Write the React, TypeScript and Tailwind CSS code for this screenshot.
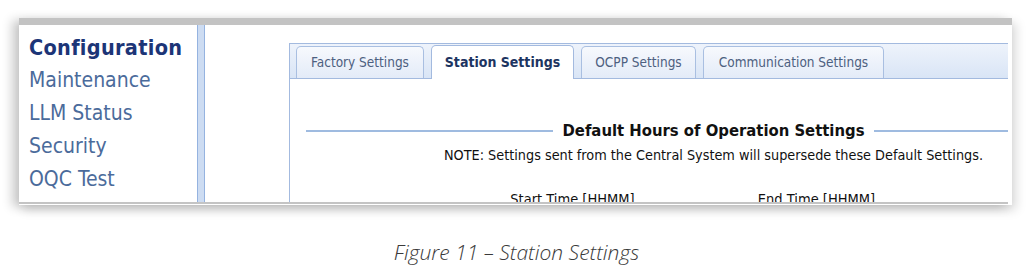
import React from "react";

const tabFont = { fontFamily: '"DejaVu Sans Condensed", "DejaVu Sans", Tahoma, sans-serif' };

function Tab({ label, active, width }: { label: string; active?: boolean; width: number }) {
  if (active) {
    return (
      <div
        className="relative -mb-px flex h-[34px] items-center justify-center rounded-t-[5px] border border-b-0 border-[#a3badf] bg-white text-[14px] font-bold text-[#1d3461]"
        style={{ width }}
      >
        {label}
      </div>
    );
  }
  return (
    <div
      className="flex h-[32px] items-center justify-center rounded-t-[5px] border border-b-0 border-[#a9bfe1] bg-gradient-to-b from-[#f7f9fd] to-[#e3ebf8] text-[13.5px] text-[#4d6080]"
      style={{ width }}
    >
      {label}
    </div>
  );
}

export default function App() {
  return (
    <div className="flex h-[270px] w-[1033px] flex-col bg-white" style={tabFont}>
      <div className="pl-[19px] pt-[18px]">
        <div className="flex h-[187px] w-[993px] flex-col border-t-[7px] border-[#c3c3c3] shadow-[-7px_2px_10px_rgba(0,0,0,0.2),4px_5px_10px_rgba(0,0,0,0.15)]">
          <div className="flex h-[179px] w-[989px] overflow-hidden border-b-[2px] border-[#c4c4c4] bg-white">
            {/* Sidebar */}
            <div className="flex w-[178px] shrink-0 flex-col pl-[10px] pt-[6px] text-[21px] leading-[33px] text-[#4b6b9b]">
              <div className="text-[21.5px] font-bold tracking-[0.3px] text-[#1c3577]">Configuration</div>
              <div>Maintenance</div>
              <div>LLM Status</div>
              <div>Security</div>
              <div>OQC Test</div>
            </div>
            {/* Divider stripe */}
            <div className="w-[8px] shrink-0 border-x border-[#95b3e0] bg-[#cddcf2]" />
            {/* Main */}
            <div className="relative flex-1 overflow-hidden pl-[84px] pt-[18px]">
              <div className="w-[848px] border-l border-[#a3badf]">
                {/* Tab strip */}
                <div className="flex h-[36px] items-end gap-[7px] border-y border-[#a3badf] bg-gradient-to-b from-[#eef3fb] to-[#d9e5f6] pl-[6px]">
                  <Tab label="Factory Settings" width={128} />
                  <Tab label="Station Settings" width={143} active />
                  <Tab label="OCPP Settings" width={115} />
                  <Tab label="Communication Settings" width={181} />
                </div>
                {/* Body */}
                <div className="bg-white pt-[42px]">
                  <div className="flex items-center px-[16px]">
                    <div className="h-[2px] flex-1 bg-[#9fbbe0]" />
                    <div className="px-[10px] text-[16.5px] font-bold leading-[20px] text-[#111]">
                      Default Hours of Operation Settings
                    </div>
                    <div className="h-[2px] flex-1 bg-[#9fbbe0]" />
                  </div>
                  <div className="mt-[5px] text-center text-[14.3px] leading-[18px] text-[#111]">
                    NOTE: Settings sent from the Central System will supersede these Default Settings.
                  </div>
                  <div className="mt-[26px] flex justify-center pr-[38px] text-[14.5px] leading-[18px] text-[#111]">
                    <div className="w-[244px] text-center">Start Time [HHMM]</div>
                    <div className="w-[244px] text-center">End Time [HHMM]</div>
                  </div>
                </div>
              </div>
            </div>
          </div>
        </div>
      </div>
      <div
        className="mt-[34px] text-center text-[21px] italic leading-[26px] text-[#3a3a3a]"
        style={{ fontFamily: '"Open Sans", "Noto Sans", sans-serif', fontWeight: 300 }}
      >
        Figure 11 – Station Settings
      </div>
    </div>
  );
}
